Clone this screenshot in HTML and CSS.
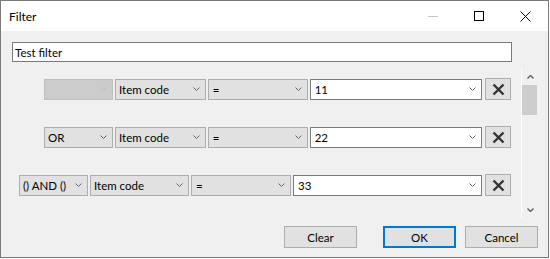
FILE: index.html
```html
<!DOCTYPE html>
<html lang="en">
<head>
    <meta charset="UTF-8">
    <title>Filter</title>
    <link rel="stylesheet" href="styles.css">
</head>
<body>
    <div class="window">
        <div class="titlebar">
            <span class="title">Filter</span>
            <div class="caption">
                <div class="caption-btn">
                    <svg width="10" height="10" viewBox="0 0 10 10"><path d="M0 5.5 H10" stroke="#c4c4c4" stroke-width="1"/></svg>
                </div>
                <div class="caption-btn">
                    <svg width="10" height="10" viewBox="0 0 10 10"><rect x="0.5" y="0.5" width="9" height="9" fill="none" stroke="#000" stroke-width="1"/></svg>
                </div>
                <div class="caption-btn">
                    <svg width="11" height="11" viewBox="0 0 11 11"><path d="M0.5 0.5 L10.5 10.5 M10.5 0.5 L0.5 10.5" stroke="#000" stroke-width="1"/></svg>
                </div>
            </div>
        </div>

        <div class="content">
            <input class="name-input" type="text" value="Test filter">

            <div class="conditions">
                <div class="rows">
                    <div class="row indent-1">
                        <div class="combo logic disabled"><span></span><svg class="chev" width="7" height="4" viewBox="0 0 7 4"><path d="M0.5 0.5 L3.5 3.5 L6.5 0.5" fill="none" stroke="#bdbdbd"/></svg></div>
                        <div class="combo field"><span>Item code</span><svg class="chev" width="7" height="4" viewBox="0 0 7 4"><path d="M0.5 0.5 L3.5 3.5 L6.5 0.5" fill="none" stroke="#606060"/></svg></div>
                        <div class="combo op"><span>=</span><svg class="chev" width="7" height="4" viewBox="0 0 7 4"><path d="M0.5 0.5 L3.5 3.5 L6.5 0.5" fill="none" stroke="#606060"/></svg></div>
                        <div class="combo value"><span>11</span><svg class="chev" width="7" height="4" viewBox="0 0 7 4"><path d="M0.5 0.5 L3.5 3.5 L6.5 0.5" fill="none" stroke="#606060"/></svg></div>
                        <button class="remove"><svg width="13" height="13" viewBox="0 0 13 13"><path d="M1.5 1.5 L11.5 11.5 M11.5 1.5 L1.5 11.5" stroke="#333" stroke-width="2.4"/></svg></button>
                    </div>
                    <div class="row indent-1">
                        <div class="combo logic"><span>OR</span><svg class="chev" width="7" height="4" viewBox="0 0 7 4"><path d="M0.5 0.5 L3.5 3.5 L6.5 0.5" fill="none" stroke="#606060"/></svg></div>
                        <div class="combo field"><span>Item code</span><svg class="chev" width="7" height="4" viewBox="0 0 7 4"><path d="M0.5 0.5 L3.5 3.5 L6.5 0.5" fill="none" stroke="#606060"/></svg></div>
                        <div class="combo op"><span>=</span><svg class="chev" width="7" height="4" viewBox="0 0 7 4"><path d="M0.5 0.5 L3.5 3.5 L6.5 0.5" fill="none" stroke="#606060"/></svg></div>
                        <div class="combo value"><span>22</span><svg class="chev" width="7" height="4" viewBox="0 0 7 4"><path d="M0.5 0.5 L3.5 3.5 L6.5 0.5" fill="none" stroke="#606060"/></svg></div>
                        <button class="remove"><svg width="13" height="13" viewBox="0 0 13 13"><path d="M1.5 1.5 L11.5 11.5 M11.5 1.5 L1.5 11.5" stroke="#333" stroke-width="2.4"/></svg></button>
                    </div>
                    <div class="row indent-0">
                        <div class="combo logic"><span>() AND ()</span><svg class="chev" width="7" height="4" viewBox="0 0 7 4"><path d="M0.5 0.5 L3.5 3.5 L6.5 0.5" fill="none" stroke="#606060"/></svg></div>
                        <div class="combo field"><span>Item code</span><svg class="chev" width="7" height="4" viewBox="0 0 7 4"><path d="M0.5 0.5 L3.5 3.5 L6.5 0.5" fill="none" stroke="#606060"/></svg></div>
                        <div class="combo op"><span>=</span><svg class="chev" width="7" height="4" viewBox="0 0 7 4"><path d="M0.5 0.5 L3.5 3.5 L6.5 0.5" fill="none" stroke="#606060"/></svg></div>
                        <div class="combo value"><span>33</span><svg class="chev" width="7" height="4" viewBox="0 0 7 4"><path d="M0.5 0.5 L3.5 3.5 L6.5 0.5" fill="none" stroke="#606060"/></svg></div>
                        <button class="remove"><svg width="13" height="13" viewBox="0 0 13 13"><path d="M1.5 1.5 L11.5 11.5 M11.5 1.5 L1.5 11.5" stroke="#333" stroke-width="2.4"/></svg></button>
                    </div>
                </div>
                <div class="scrollbar">
                    <div class="arrow"><svg width="7" height="4" viewBox="0 0 7 4"><path d="M0.5 3.5 L3.5 0.5 L6.5 3.5" fill="none" stroke="#606060" stroke-width="1.4"/></svg></div>
                    <div class="track"><div class="thumb"></div></div>
                    <div class="arrow"><svg width="7" height="4" viewBox="0 0 7 4"><path d="M0.5 0.5 L3.5 3.5 L6.5 0.5" fill="none" stroke="#606060" stroke-width="1.4"/></svg></div>
                </div>
            </div>

            <div class="footer">
                <button class="btn clear">Clear</button>
                <button class="btn ok">OK</button>
                <button class="btn">Cancel</button>
            </div>
        </div>
    </div>
</body>
</html>
```

FILE: styles.css
```css
body {
    margin: 0;
    background: #fff;
    font-family: Lato, "Noto Sans", sans-serif;
    font-size: 11.5px;
    color: #000;
}
.window {
    width: 547px;
    height: 256px;
    border: 1px solid #7a7a7a;
    display: flex;
    flex-direction: column;
    background: #f0f0f0;
}
.titlebar {
    height: 30px;
    background: #fff;
    display: flex;
    align-items: center;
}
.title {
    padding-left: 8px;
    font-size: 12px;
    flex: 1;
}
.caption {
    display: flex;
    height: 30px;
}
.caption-btn {
    width: 46px;
    display: flex;
    align-items: center;
    justify-content: center;
}
.content {
    flex: 1;
    display: flex;
    flex-direction: column;
}
.name-input {
    margin: 11px 0 0 11px;
    width: 500px;
    height: 20px;
    box-sizing: border-box;
    border: 1px solid #7a7a7a;
    padding: 0 2px;
    font-family: inherit;
    font-size: 11.5px;
    outline: none;
}
.conditions {
    margin: 6px 10px 0 11px;
    height: 150px;
    display: flex;
}
.rows {
    flex: 1;
    padding: 10px 10px 0 0;
    display: flex;
    flex-direction: column;
    gap: 26px;
}
.row {
    display: flex;
    align-items: center;
    height: 22px;
    gap: 2px;
}
.indent-0 {
    padding-left: 7px;
}
.indent-1 {
    padding-left: 32px;
}
.combo {
    height: 21px;
    box-sizing: border-box;
    border: 1px solid #adadad;
    background: #e1e1e1;
    display: flex;
    align-items: center;
    padding: 0 5px 0 3px;
    white-space: nowrap;
    overflow: hidden;
}
.combo span {
    flex: 1;
}
.combo .chev {
    flex: none;
}
.combo.disabled {
    background: #cccccc;
    border-color: #bfbfbf;
}
.logic {
    width: 69px;
    flex: none;
}
.op {
    width: 100px;
    flex: none;
    padding-left: 4px;
}
.field {
    flex: 1 1 0;
}
.value {
    flex: 2 1 0;
    background: #fff;
    border-color: #7a7a7a;
    padding-left: 4px;
}
.remove {
    width: 26px;
    height: 22px;
    margin-left: 1px;
    border: 1px solid #adadad;
    background: #e1e1e1;
    padding: 0;
    display: flex;
    align-items: center;
    justify-content: center;
}
.scrollbar {
    width: 16px;
    border-left: 1px solid #fff;
    display: flex;
    flex-direction: column;
}
.arrow {
    height: 17px;
    display: flex;
    align-items: center;
    justify-content: center;
}
.track {
    flex: 1;
}
.thumb {
    width: 15px;
    height: 30px;
    background: #cdcdcd;
}
.footer {
    display: flex;
    justify-content: flex-end;
    margin: 8px 10px 0 0;
}
.btn {
    width: 73px;
    height: 22px;
    border: 1px solid #adadad;
    background: #e1e1e1;
    font-family: inherit;
    font-size: 11.5px;
    color: #000;
    padding: 0;
    margin-left: 9px;
}
.clear {
    margin-right: 17px;
}
.ok {
    border: 2px solid #0078d7;
}
```
